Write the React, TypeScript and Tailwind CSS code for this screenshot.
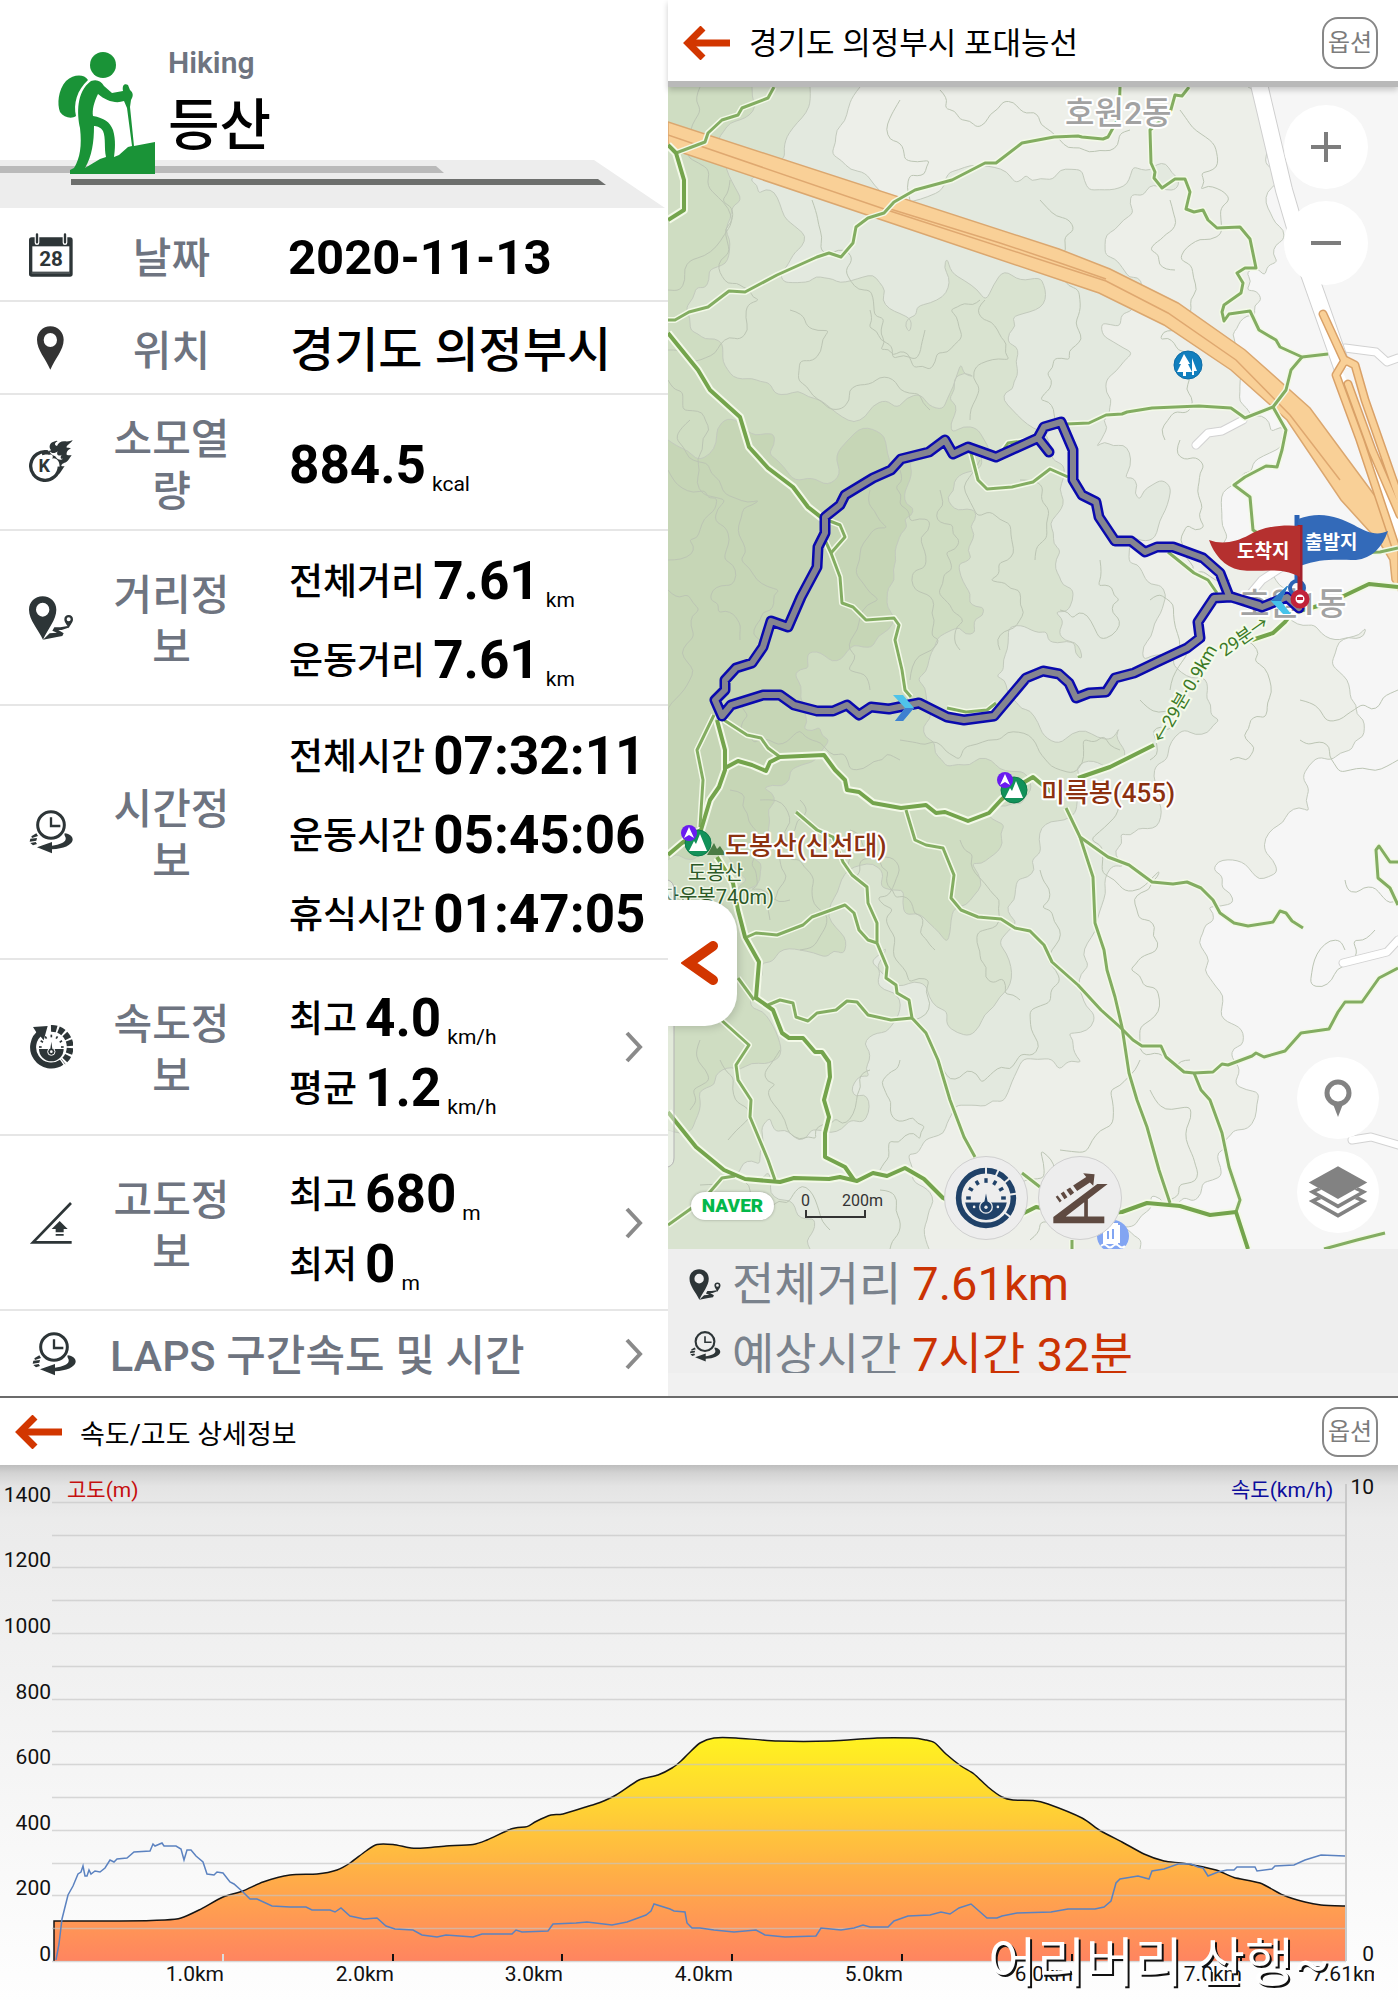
import React from "react";

type Pt = [number, number];

const FONT = "font-[Roboto,'Noto_Sans_CJK_KR',sans-serif]";

/* ---------- geometry helpers ---------- */

const pts = (s: string): Pt[] =>
  s.trim().split(/\s+/).map((p) => p.split(",").map(Number) as unknown as Pt);

const line = (s: string) => "M" + s.trim().split(/\s+/).join("L");

function smooth(p: Pt[]): string {
  let d = `M${p[0][0]},${p[0][1]}`;
  for (let i = 0; i < p.length - 1; i++) {
    const a = p[Math.max(0, i - 1)];
    const b = p[i];
    const c = p[i + 1];
    const e = p[Math.min(p.length - 1, i + 2)];
    d += `C${(b[0] + (c[0] - a[0]) / 8).toFixed(1)},${(b[1] + (c[1] - a[1]) / 8).toFixed(1)} ${(c[0] - (e[0] - b[0]) / 8).toFixed(1)},${(c[1] - (e[1] - b[1]) / 8).toFixed(1)} ${c[0]},${c[1]}`;
  }
  return d;
}

/* Breaks a coarse outline into an irregular contour line. */
function contour(s: string, seed: number): string {
  let state = seed * 7919 + 13;
  const rnd = () => {
    state = (state * 16807) % 2147483647;
    return state / 2147483647 - 0.5;
  };
  let p = pts(s);
  for (let k = 0; k < 3; k++) {
    const out: Pt[] = [p[0]];
    for (let i = 0; i < p.length - 1; i++) {
      const [ax, ay] = p[i];
      const [bx, by] = p[i + 1];
      const len = Math.hypot(bx - ax, by - ay);
      if (len > 14) {
        const r = rnd() * 0.75;
        out.push([(ax + bx) / 2 - (by - ay) * r, (ay + by) / 2 + (bx - ax) * r]);
      }
      out.push([bx, by]);
    }
    p = out;
  }
  let d = `M${p[0][0]},${p[0][1]}`;
  for (let i = 1; i < p.length - 1; i++) {
    const mx = (p[i][0] + p[i + 1][0]) / 2;
    const my = (p[i][1] + p[i + 1][1]) / 2;
    d += `Q${p[i][0].toFixed(1)},${p[i][1].toFixed(1)} ${mx.toFixed(1)},${my.toFixed(1)}`;
  }
  const e = p[p.length - 1];
  return d + `L${e[0]},${e[1]}`;
}

/* ---------- small icons ---------- */

const INK = "#2d3537";

function CalendarIcon() {
  return (
    <svg viewBox="0 0 132 132" className="size-11" aria-hidden="true">
      <rect x="0" y="13" width="131" height="118" rx="8" fill={INK} />
      <rect x="10" y="40" width="111" height="76" fill="#fff" />
      <rect x="8" y="119" width="115" height="2" fill="#8b9092" />
      <g stroke="#fff" strokeWidth="14" strokeLinecap="round"><path d="M24,6V29M108,6V29" /></g>
      <g stroke={INK} strokeWidth="7" strokeLinecap="round"><path d="M24,4V28M108,4V28" /></g>
      <text x="66" y="99" textAnchor="middle" fontSize="62" fontWeight="700" fill={INK} className={FONT}>28</text>
    </svg>
  );
}

function PinIcon() {
  return (
    <svg viewBox="0 0 132 132" className="size-11" aria-hidden="true">
      <path fillRule="evenodd" fill="#333" d="M64,1C41,1 24,19 24,41C24,72 50,97 64,131C78,97 104,72 104,41C104,19 87,1 64,1ZM64,21A20,21 0 1 1 64,63A20,21 0 1 1 64,21Z" />
    </svg>
  );
}

function CalorieIcon() {
  return (
    <svg viewBox="0 0 132 132" className="size-11" aria-hidden="true">
      <path d="M57,36A43,43 0 1 0 91,80" fill="none" stroke={INK} strokeWidth="10" />
      <path fill={INK} d="M38,38L54,30C50,33 62,36 66,30C58,22 62,8 74,5C88,0 80,3 86,3C78,8 74,14 84,18C88,8 96,3 108,4C118,5 126,3 131,0C126,10 114,14 112,22C116,24 122,24 126,24C118,30 112,34 113,44C118,46 124,46 128,46C122,52 120,62 112,66C104,70 98,70 97,78C102,80 106,78 107,78C102,84 96,98 88,104C92,92 94,74 88,64C84,56 74,52 70,56C74,48 70,42 62,44C52,44 50,42 40,46Z" />
      <path fill="#fff" d="M62,34C68,42 80,40 86,34C80,46 92,50 98,44C92,54 96,58 102,56C96,62 84,58 80,50C74,46 64,44 62,34Z" />
      <text x="46" y="97" textAnchor="middle" fontSize="54" fontWeight="700" fill={INK} className={FONT}>K</text>
    </svg>
  );
}

function DistanceIcon({ className = "size-11" }: { className?: string }) {
  return (
    <svg viewBox="0 0 132 132" className={className} aria-hidden="true">
      <path fillRule="evenodd" fill={INK} d="M41,1C18,1 0,18 0,41C0,72 27,98 42,131C56,98 82,72 82,41C82,18 64,1 41,1ZM41,20A20,21 0 1 1 41,62A20,21 0 1 1 41,20Z" />
      <path fill={INK} d="M42,131L62,112L84,110L70,104L76,94L94,94L116,90L118,95L98,102L88,102L104,112L100,120L80,124Z" />
      <path fillRule="evenodd" fill={INK} d="M119,57C111,57 106,62 106,70C106,80 114,86 119,97C124,86 132,80 132,70C132,62 127,57 119,57ZM119,64A6,6 0 1 1 119,76A6,6 0 1 1 119,64Z" />
    </svg>
  );
}

function TimeIcon({ className = "size-11" }: { className?: string }) {
  return (
    <svg viewBox="0 0 132 132" className={className} aria-hidden="true">
      <circle cx="66" cy="45" r="40" fill="none" stroke={INK} strokeWidth="9" />
      <path d="M66,22V48H94" fill="none" stroke={INK} strokeWidth="7" />
      <path fill={INK} d="M107,70C122,72 132,80 131,90C128,106 104,116 69,118V130L24,112L69,96V107C92,104 108,98 110,88C112,80 104,78 107,70Z" />
      <path fill={INK} d="M22,70L27,78L9,84L7,79ZM4,86L24,84L22,92L2,95ZM4,99L20,96L24,102L12,106Z" />
    </svg>
  );
}

function SpeedIcon() {
  const ticks = [0, 30, 60, 90, 120, 150, 180];
  return (
    <svg viewBox="0 0 132 132" className="size-11" aria-hidden="true">
      <path d="M36,22A54,54 0 1 0 98,112" fill="none" stroke={INK} strokeWidth="18" />
      <path fill={INK} d="M12,6L56,3L44,46L34,34L24,42L22,22Z" />
      <path d="M66,10A56,56 0 0 1 102,110" fill="none" stroke={INK} strokeWidth="20" strokeDasharray="17 6" />
      <path fill={INK} d="M30,72H104A37,37 0 0 1 30,72Z" />
      {ticks.map((a) => (
        <path key={a} d="M30,66H38" stroke={INK} strokeWidth="5" transform={`rotate(${a} 67 66)`} />
      ))}
      <circle cx="67" cy="80" r="11" fill={INK} stroke="#fff" strokeWidth="3" />
      <path d="M67,50L71,78H63Z" fill={INK} />
      <circle cx="67" cy="80" r="4" fill="#fff" />
    </svg>
  );
}

function ElevationIcon() {
  return (
    <svg viewBox="0 0 132 132" className="size-11" aria-hidden="true">
      <path d="M126,6L12,124H128" fill="none" stroke={INK} strokeWidth="8" />
      <path fill={INK} d="M92,60L116,84H104V94H80V84H68ZM80,99H104V104H80Z" />
    </svg>
  );
}

function BackArrow() {
  return (
    <svg viewBox="0 0 48 34" className="h-[34px] w-12" aria-hidden="true">
      <path d="M47,17H6" stroke="#d23600" strokeWidth="7" />
      <path d="M20,2L5,17L20,32" fill="none" stroke="#d23600" strokeWidth="7" />
    </svg>
  );
}

function Chevron() {
  return (
    <svg viewBox="0 0 20 32" className="h-8 w-5" aria-hidden="true">
      <path d="M3,2L16,16L3,30" fill="none" stroke="#8a8a8a" strokeWidth="4" />
    </svg>
  );
}

/* ---------- summary panel ---------- */

function SummaryHeader() {
  return (
    <header className="relative h-[209px]">
      <svg viewBox="0 0 668 209" preserveAspectRatio="xMinYMin meet" className="absolute inset-0 size-full" aria-hidden="true">
        <path fill="#ededed" d="M0,160H594L665,208H0Z" />
        <path fill="#bababa" d="M0,166H436L444,173H0Z" />
        <path fill="#6d6f6d" d="M71,179H598L606,185H71Z" />
        <g fill="#1a9337">
          <circle cx="103" cy="65" r="13" />
          <path d="M88,80C84,74 74,74 66,81C58,90 57,104 60,112C64,118 72,119 76,116C73,104 77,90 88,80Z" />
          <path d="M91,81C97,79 101,81 104,86L112,93L123,91C122,86 124,83 128,85L130,90C134,93 133,97 131,100L130,107L134,146L155,142V174H70V170L74,168C80,158 82,146 80,128C77,114 76,92 91,81ZM98,94C94,102 92,110 93,116C104,118 110,122 113,130C116,140 115,150 114,157L119,155L128,147L132,146L127,108L124,101C116,104 106,101 98,94ZM94,126C94,142 92,156 85,168L100,159L106,157C104,148 106,138 103,131C101,127 96,126 94,126Z" fillRule="evenodd" />
        </g>
      </svg>
      <div className="relative pt-[46px] pl-42">
        <p className="text-[30px]/[34px] font-semibold text-[#6e7480]">Hiking</p>
        <h1 className="pt-2.5 text-[56px]/[72px] font-medium text-black">등산</h1>
      </div>
    </header>
  );
}

type Item = { label?: string; value: string; unit?: string };

function Metric({ label, value, unit }: Item) {
  return (
    <p className="flex items-end whitespace-nowrap text-black">
      {label && <span className="mr-2 text-[37px]/[58px] font-medium">{label}</span>}
      <span className="text-[53px]/[62px] font-bold">{value}</span>
      {unit && <span className="ml-1.5 text-[21px]/[24px]">{unit}</span>}
    </p>
  );
}

function RowLabel({ icon, children }: { icon: React.ReactNode; children: React.ReactNode }) {
  return (
    <>
      <span className="w-[99px] shrink-0 pl-[29px]">{icon}</span>
      <span className="w-[145px] shrink-0 pt-2 text-center text-[42px]/[52px] font-medium text-[#6e7480]">{children}</span>
    </>
  );
}

function SummaryPanel() {
  return (
    <section className="min-w-0 bg-white">
      <SummaryHeader />
      <div className="flex min-h-[93px] items-center border-b-2 border-[#e6e6e6]">
        <RowLabel icon={<CalendarIcon />}>날짜</RowLabel>
        <p className="pt-1.5 pl-11 text-[49px]/[60px] font-bold text-black">2020-11-13</p>
      </div>
      <div className="flex min-h-[93px] items-center border-b-2 border-[#e6e6e6]">
        <RowLabel icon={<PinIcon />}>위치</RowLabel>
        <p className="pt-1.5 pl-[46px] text-[48px]/[60px] font-medium text-black">경기도 의정부시</p>
      </div>
      <div className="flex min-h-[136px] items-center border-b-2 border-[#e6e6e6]">
        <RowLabel icon={<CalorieIcon />}>소모열량</RowLabel>
        <div className="pt-1.5 pl-[45px]">
          <Metric value="884.5" unit="kcal" />
        </div>
      </div>
      <div className="flex min-h-[175px] items-center border-b-2 border-[#e6e6e6]">
        <RowLabel icon={<DistanceIcon />}>거리정보</RowLabel>
        <div className="flex flex-col gap-[17px] pt-1.5 pl-[45px]">
          <Metric label="전체거리" value="7.61" unit="km" />
          <Metric label="운동거리" value="7.61" unit="km" />
        </div>
      </div>
      <div className="flex min-h-[254px] items-center border-b-2 border-[#e6e6e6]">
        <RowLabel icon={<TimeIcon />}>시간정보</RowLabel>
        <div className="flex flex-col gap-[17px] pt-1.5 pl-[45px]">
          <Metric label="전체시간" value="07:32:11" />
          <Metric label="운동시간" value="05:45:06" />
          <Metric label="휴식시간" value="01:47:05" />
        </div>
      </div>
      <button className="flex min-h-[176px] w-full items-center border-b-2 border-[#e6e6e6] text-left">
        <RowLabel icon={<SpeedIcon />}>속도정보</RowLabel>
        <span className="flex grow flex-col gap-2 pt-3 pl-[45px]">
          <Metric label="최고" value="4.0" unit="km/h" />
          <Metric label="평균" value="1.2" unit="km/h" />
        </span>
        <span className="pr-6"><Chevron /></span>
      </button>
      <button className="flex min-h-[175px] w-full items-center border-b-2 border-[#e6e6e6] text-left">
        <RowLabel icon={<ElevationIcon />}>고도정보</RowLabel>
        <span className="flex grow flex-col gap-2 pt-3 pl-[45px]">
          <Metric label="최고" value="680" unit="m" />
          <Metric label="최저" value="0" unit="m" />
        </span>
        <span className="pr-6"><Chevron /></span>
      </button>
      <button className="flex min-h-[85px] w-full items-center text-left">
        <span className="w-[110px] shrink-0 pl-8"><TimeIcon /></span>
        <span className="grow pt-1 text-[43px]/[52px] font-medium text-[#6e7480]">LAPS 구간속도 및 시간</span>
        <span className="pr-6"><Chevron /></span>
      </button>
    </section>
  );
}

/* ---------- map ---------- */

const LAYERS: { fill: string; edge: string; close: string; seed: number }[] = [
  {
    fill: "#edefe9",
    edge: "1248,87 1268,150 1284,230 1278,262 1246,272 1262,300 1230,350 1240,392 1290,430 1282,447 1240,480 1222,513 1236,560 1287,590 1340,640 1366,627 1350,690 1352,750 1310,812 1273,828 1278,872 1213,870 1234,903 1203,933 1204,970 1222,1007 1231,1057 1234,1130 1213,1180 1150,1195 1122,1227 1140,1249",
    close: "668,1249 668,87",
    seed: 3,
  },
  {
    fill: "#e3e9df",
    edge: "860,87 836,130 850,170 947,173 994,167 1040,178 1082,170 1110,190 1166,163 1180,180 1134,213 1115,230 1138,277 1101,323 1133,353 1106,393 1096,447 1130,452 1140,500 1171,487 1157,533 1129,563 1161,613 1143,660 1203,677 1208,733 1157,787 1157,827 1120,833 1124,867 1106,893 1087,943 1092,1027 1068,1033 1082,1063 1008,1093 947,1123 933,1137 915,1183 929,1210 929,1249",
    close: "668,1249 668,87",
    seed: 8,
  },
  {
    fill: "#d9e3d0",
    edge: "810,87 789,133 750,180 784,217 780,273 840,283 863,277 882,300 910,333 943,297 947,257 1040,277 1036,310 1012,317 1017,347 1003,400 1022,420 1052,460 1064,500 1054,533 1073,600 1082,660 1031,630 1003,660 1030,710 1120,727 1124,760 1078,787 1031,860 1017,923 994,1007 957,1033 929,997 887,947 877,983 900,1010 877,1033 854,1083 863,1123 820,1130 770,1117 760,1165 733,1177 790,1200 810,1249",
    close: "668,1249 668,87",
    seed: 21,
  },
  {
    fill: "#cfddc2",
    edge: "752,87 740,120 718,150 742,200 730,240 696,287 690,330 733,377 770,383 808,397 854,423 943,410 961,363 975,377 952,433 990,450 947,497 971,543 966,587 975,633 929,660 926,700 947,767 1031,783 989,817 1003,843 971,863 947,943 929,923 873,863 845,937 800,950 761,963 780,1043 740,1070 700,1110 668,1130",
    close: "668,1130 668,87",
    seed: 34,
  },
  {
    fill: "#c6d6b6",
    edge: "668,440 742,423 784,467 882,433 882,473 925,455 910,480 901,533 887,607 873,647 808,653 800,700 830,740 790,770 770,820 760,880 740,900 700,850 668,860",
    close: "668,860 668,440",
    seed: 47,
  },
];

const CONTOURS = [
  "700,87 690,130 710,170 690,260 668,290",
  "730,180 720,260 760,300 740,340 668,350",
  "812,200 820,250 870,290 880,350 930,370 950,310 980,300",
  "985,300 1010,360 970,420",
  "1040,200 1075,230 1060,270 1080,300 1070,360 1040,400 1060,425",
  "1180,110 1210,140 1200,190 1230,200 1210,240 1180,260 1190,300 1160,340 1190,380 1165,440",
  "900,100 890,140 930,160 910,200",
  "940,90 960,120 1020,110 1060,140 1100,150 1130,130",
  "668,470 705,490 700,530 668,560",
  "690,420 720,480 760,500 740,560 780,590 760,640",
  "900,470 930,520 915,590 940,640 910,680",
  "980,460 1000,520 990,580 1020,620 1000,650",
  "870,490 860,560 880,600 850,640 870,690",
  "1020,480 1050,510 1035,560",
  "1180,440 1200,500 1180,540 1230,580",
  "668,590 700,610 690,680 668,720",
  "900,740 960,760 1000,740 1060,770 1120,750",
  "1120,800 1090,840 1160,870 1150,920 1130,970 1160,1000 1140,1040 1190,1060",
  "730,790 760,840 750,890 790,900",
  "800,800 790,860 820,910 800,950",
  "850,830 900,870 890,930 930,980 915,1020",
  "960,840 1000,900 980,960 1020,1000",
  "1040,870 1060,940 1030,1010 1010,1070 950,1080 930,1040",
  "700,1040 710,1080 690,1110",
  "780,1050 770,1100 800,1140 850,1120 870,1070",
  "900,1060 890,1110 920,1140 880,1170",
  "1060,1150 1100,1130 1110,1090 1140,1060",
  "1020,1190 1040,1150 1065,1180",
  "1150,1090 1190,1150 1170,1200",
  "700,1185 760,1200 810,1190 830,1230",
  "880,1190 900,1220 890,1249",
  "1030,1240 1060,1215 1090,1230",
  "1300,740 1350,770 1398,760",
  "1375,930 1310,985 1330,940 1345,950",
  "1345,880 1398,900",
  "1300,700 1340,720 1398,690",
  "1240,640 1270,680 1250,720 1230,760",
  "1140,700 1180,720 1150,760",
  "668,380 710,430 700,470 730,540 710,600 740,640",
  "790,310 830,330 800,360 850,400 900,390 930,410",
  "870,310 880,340 915,360 925,330",
  "940,490 960,540 945,600 960,650",
  "1100,560 1120,600 1100,640 1060,610",
  "740,700 770,740 800,730 850,770 900,760",
  "760,800 780,860 770,920",
  "830,840 850,880 880,860 910,900 935,950",
  "1170,200 1150,250 1175,270",
  "1150,600 1180,640 1170,690",
  "720,1060 735,1100 728,1140",
];

const MAIN_TRAILS = [
  "668,145 676,153 684,180 684,210 668,220",
  "668,333 698,370 710,390 740,417 749,447 768,468 793,487 808,507 822,518",
  "717,720 725,750 725,770 719,787 710,800 701,830 682,843 668,855",
  "725,768 738,761 752,765 766,771 770,762 780,757 824,755 835,770 845,780 847,790 859,792 873,803 901,808 926,805 936,813 945,812 968,821 989,813 1001,800 1013,789 1033,777 1040,783 1055,795",
  "1078,778 1110,767 1154,745",
  "1252,640 1273,633 1285,622 1292,613 1329,603 1369,584 1398,587",
  "717,857 733,883 738,910 745,937 759,962 756,998 773,1010 782,1033 789,1038 803,1038 815,1052 822,1052 829,1062 830,1077 824,1100 829,1117 825,1133 825,1157 845,1167 854,1180",
  "668,1112 696,1147 724,1170 745,1179 780,1182 794,1178 829,1179 840,1177 857,1181 873,1173 887,1176 905,1168 924,1179 943,1198 1000,1225 1026,1212 1036,1207 1080,1215 1122,1212 1147,1203 1180,1206 1210,1215 1236,1212 1248,1249",
];

const SIDE_TRAILS = [
  "774,87 768,98 742,108 738,115 722,120 708,133 705,142 676,153",
  "1120,87 1119,117 1108,137 1103,139 1082,137 1078,136 1054,137 1022,143 996,163 985,163 952,180 915,190 894,202 884,213 868,218 856,227 853,243 841,257 829,253 817,257 777,275 745,292 729,291 708,307 689,312 675,320 668,320",
  "1189,87 1182,96 1175,95 1170,113 1150,130 1151,163 1155,172 1154,178 1162,188 1175,179 1185,179 1190,192 1186,209 1194,212 1203,210 1208,220 1217,228 1240,227 1250,239 1256,268 1245,268 1237,273 1243,283 1241,293 1224,305 1222,312 1224,321 1229,314 1250,311 1259,330 1276,340 1280,347 1302,357 1328,354",
  "1302,357 1291,370 1286,390 1273,407 1245,418 1231,408 1199,406 1152,408 1127,412 1122,414 1106,415 1089,423 1066,424",
  "1273,407 1286,430 1282,450 1277,467 1266,466 1245,477 1234,485 1250,497 1253,530 1273,543 1301,555 1380,552 1398,548",
  "822,518 840,525 845,537 831,553",
  "825,540 831,553 840,577 842,603 853,607 866,620 894,618 899,625 895,640 902,670 905,690 911,697",
  "971,453 978,480 987,489 1012,487 1033,482 1050,469 1068,477",
  "1003,450 1008,443 1030,440",
  "1168,552 1194,573 1208,580 1217,593",
  "947,708 966,712 987,710 996,703",
  "714,715 697,750 703,780 700,827",
  "724,720 747,735 761,738 768,748 780,757",
  "1066,808 1080,837 1108,857 1129,865 1152,882 1173,884 1187,882 1201,888 1213,900 1220,913 1234,923 1248,926 1273,922 1280,911 1286,913 1292,921 1303,928",
  "1080,837 1093,877 1095,923 1104,950 1107,970 1115,997 1122,1027 1129,1073 1137,1100 1147,1127 1159,1170 1170,1203",
  "906,810 915,840 926,845 943,848 954,875 951,898 961,910 978,917 1001,919 1015,928 1030,931 1044,945 1052,962 1078,985 1101,1010 1120,1027 1133,1040 1142,1046 1161,1046 1166,1057 1184,1072 1194,1073 1213,1072 1222,1064 1228,1065 1252,1056 1256,1053 1264,1057 1285,1051 1301,1033 1329,1029 1338,1012 1345,1002 1362,1002 1379,978 1398,968",
  "1194,1073 1201,1090 1210,1100 1222,1133 1229,1167 1240,1200 1236,1212",
  "796,812 817,830 833,837 843,862 852,875 867,887 868,903 877,923 877,943 887,967 886,978 896,985 897,993 909,1000 912,1018 926,1033 938,1060 950,1100 964,1137 975,1157",
  "1022,1173 1040,1187",
  "747,937 756,933 777,935 803,925 812,917 845,905 854,913 859,930 868,940 877,943",
  "768,1005 780,1000 793,1003 796,1017 808,1021 817,1013 836,1010 847,1001 857,1002 868,1015 891,1020 912,1018",
  "719,1018 749,1045 736,1065 738,1080 751,1100 750,1117 768,1160 775,1180",
  "738,978 754,1000",
  "735,1176 722,1178 703,1200 668,1225",
  "1398,862 1390,862 1379,846 1376,850 1378,878 1390,888 1398,905",
  "1324,1249 1357,1240 1385,1233",
  "1072,1240 1072,1249",
];

const ROUTE =
  "1299,608 1287,597 1262,607 1229,596 1220,573 1203,558 1173,547 1157,547 1145,552 1131,541 1115,541 1099,517 1096,502 1082,495 1073,480 1073,450 1061,422 1044,427 1038,438 996,457 968,447 953,454 945,440 929,452 901,459 891,470 873,478 845,495 840,505 825,517 825,533 818,547 817,567 801,597 788,627 771,621 763,647 752,663 736,668 725,680 725,690 715,700 722,716 731,705 763,695 780,695 794,705 817,711 833,711 847,705 859,715 871,707 889,709 919,703 947,717 964,720 994,716 1026,678 1043,671 1059,674 1069,683 1076,698 1089,693 1106,692 1115,678 1134,673 1157,662 1187,648 1200,638 1198,622 1214,598 1231,597 1259,605";
const ROUTE_SPUR = "1038,438 1049,452";

const WHITE_ROADS = [
  "1345,348 1376,352 1387,362 1398,358",
  "1196,445 1208,433 1222,431 1243,420",
  "1343,963 1387,952 1398,940",
  "1352,1140 1371,1137 1398,1145",
  "1252,592 1262,580 1285,565",
];

function PeakMarker({ x, y }: { x: number; y: number }) {
  return (
    <g transform={`translate(${x} ${y})`}>
      <circle r="13" fill="#12925a" stroke="#0b7a49" />
      <path d="M-9,8L-4,-2L-2,1L2,-9L9,8Z" fill="#fff" />
      <circle cx="-9" cy="-10" r="8" fill="#6a1bf0" />
      <path d="M-9,-16L-4,-5L-9,-8L-14,-5Z" fill="#fff" />
    </g>
  );
}

function MapCanvas() {
  return (
    <svg viewBox="668 87 730 1162" preserveAspectRatio="xMidYMid slice" className={`absolute inset-0 size-full ${FONT}`} role="img" aria-label="등산 경로 지도">
      <rect x="668" y="87" width="730" height="1162" fill="#f6f6f6" />
      {LAYERS.map((l) => {
        const d = contour(l.edge, l.seed);
        return (
          <g key={l.fill}>
            <path d={d + "L" + l.close.split(" ").join("L") + "Z"} fill={l.fill} />
            <path d={d} fill="none" stroke="#c3cabd" strokeWidth="1" />
          </g>
        );
      })}
      <g fill="none" stroke="#bcc5b4" strokeWidth="1">
        {CONTOURS.map((c, i) => <path key={c} d={contour(c, i + 5)} />)}
      </g>

      <g fill="none" strokeLinejoin="round">
        {WHITE_ROADS.map((r) => <path key={r} d={line(r)} stroke="#d2d2d2" strokeWidth="9" strokeLinecap="round" />)}
        {WHITE_ROADS.map((r) => <path key={r} d={line(r)} stroke="#fff" strokeWidth="7" strokeLinecap="round" />)}
        <path d="M1258,80L1284,190L1307,268L1343,370" stroke="#cfcfcf" strokeWidth="18" />
        <path d="M1258,80L1284,190L1307,268L1343,370" stroke="#fff" strokeWidth="16" />
      </g>

      <path d="M668,122L1059,249L1110,269L1178,303L1245,350L1310,408L1378,500L1398,530V590L1392,580L1390,560L1380,543L1341,500L1287,420L1231,370L1164,325L1099,293L668,148Z" fill="#f9d097" stroke="#dba76f" strokeWidth="1.500" />
      <path d="M668,135L887,210L1106,281L1168,313L1236,360L1290,415L1340,480M887,208L1000,243L1060,263L1106,279" fill="none" stroke="#dfa870" strokeWidth="1.500" />
      <path d="M1398,540L1378,475L1352,405L1336,372" fill="none" stroke="#fff" strokeWidth="12" />
      <g fill="none" strokeLinecap="round" strokeLinejoin="round">
        <path d="M1323,314L1345,362M1345,360L1336,375L1360,440L1395,545M1348,384L1372,450L1400,515M1345,360L1355,365L1365,400L1400,500" stroke="#d9a168" strokeWidth="9" />
        <path d="M1323,314L1345,362M1345,360L1336,375L1360,440L1395,545M1348,384L1372,450L1400,515M1345,360L1355,365L1365,400L1400,500" stroke="#f9d097" strokeWidth="6" />
      </g>

      <g fill="none" strokeLinejoin="round">
        {SIDE_TRAILS.map((t) => <path key={t} d={line(t)} stroke="#f3f9e8" strokeWidth="6" />)}
        {MAIN_TRAILS.map((t) => <path key={t} d={line(t)} stroke="#f3f9e8" strokeWidth="8" />)}
        {SIDE_TRAILS.map((t) => <path key={t} d={line(t)} stroke="#83ad61" strokeWidth="3" />)}
        {MAIN_TRAILS.map((t) => <path key={t} d={line(t)} stroke="#74a44c" strokeWidth="4" />)}
      </g>

      <g fontSize="32" fontWeight="500" fill="#a2a2a2" stroke="#fff" strokeWidth="4" paintOrder="stroke" strokeLinejoin="round">
        <text x="1065" y="124">호원2동</text>
        <text x="1240" y="615">호원1동</text>
      </g>

      <g fontSize="18" fill="#3c7a26" stroke="#f4faea" strokeWidth="4" paintOrder="stroke">
        <text transform="translate(1163 744) rotate(-60)">←29분·0.9km</text>
        <text transform="translate(1225 657) rotate(-35)">29분→</text>
      </g>

      <g fill="none" strokeLinejoin="round" strokeLinecap="round">
        <path d={line(ROUTE) + line(ROUTE_SPUR)} stroke="#0a0aae" strokeWidth="11" />
        <path d={line(ROUTE) + line(ROUTE_SPUR)} stroke="#85858f" strokeWidth="6" />
      </g>

      <path d="M893,695H903L914,708L903,721H895L905,708Z" fill="#4fc4ea" />
      <path d="M903,721L914,708H905L895,721Z" fill="#3f80d0" />
      <path d="M1287,586L1271,601L1283,614H1291L1281,601L1288,586Z" fill="#45c3ea" />
      <path d="M1287,586L1271,601H1281L1288,586Z" fill="#2f7bc4" />

      <circle cx="1297" cy="588" r="7" fill="none" stroke="#2a62b4" strokeWidth="4" />
      <path d="M1297,515V580" stroke="#2a62b4" strokeWidth="5" />
      <path d="M1298,519C1322,510 1340,518 1354,525C1368,533 1377,536 1388,531C1382,548 1372,558 1356,560C1336,560 1322,558 1300,566Z" fill="#336ab9" />
      <path d="M1300,525V594" stroke="#a3202b" strokeWidth="5" />
      <path d="M1300,526C1282,524 1262,527 1249,535C1236,542 1222,545 1209,540C1214,554 1224,567 1240,570C1262,573 1280,566 1300,577Z" fill="#b5302f" />
      <circle cx="1300" cy="599" r="7" fill="#fff" stroke="#c1233a" strokeWidth="5" />
      <path d="M1297,597H1303V600H1297Z" fill="#c1233a" />
      <g fontSize="19" fontWeight="700" fill="#fff">
        <text x="1305" y="549">출발지</text>
        <text x="1237" y="558">도착지</text>
      </g>

      <circle cx="1188" cy="365" r="14" fill="#117fbe" stroke="#0b6ba6" />
      <path d="M1184,354L1190,364H1188L1192,372H1186V376H1183V372H1177L1181,364H1179ZM1192,358L1197,371H1194V375H1192Z" fill="#fff" />

      <path d="M707,855L714,843L717,849L720,846L726,855Z" fill="#4b7c45" />
      <PeakMarker x={1014} y={790} />
      <PeakMarker x={698} y={843} />
      <g fontSize="26" fontWeight="500" fill="#8c3110" stroke="#fff" strokeWidth="4" paintOrder="stroke" strokeLinejoin="round">
        <text x="1041" y="802">미륵봉(455)</text>
        <text x="725" y="855">도봉산(신선대)</text>
      </g>
      <g fontSize="20" fill="#2c5927" stroke="#f1f7e8" strokeWidth="3" paintOrder="stroke" strokeLinejoin="round">
        <text x="688" y="880">도봉산</text>
        <text x="774" y="904" textAnchor="end">자운봉740m)</text>
      </g>

      <circle cx="1113" cy="1236" r="16" fill="#82a5f2" />
      <path d="M1104,1228H1108V1225H1110V1228H1112V1224H1117V1243H1104ZM1119,1225V1243" fill="#fff" stroke="#fff" strokeWidth="2" />
      <path d="M1108,1231V1239M1113,1229V1239" stroke="#82a5f2" strokeWidth="2" />
      <path d="M1101,1246Q1104,1243 1107,1246T1113,1246T1119,1246T1125,1246" stroke="#fff" strokeWidth="2" fill="none" />
      <path d="M660,880H668Q674,882 674,890V1158Q674,1165 668,1167H660Z" fill="#fff" fillOpacity=".4" stroke="#b3b3b3" />
    </svg>
  );
}

function GaugeGlyph() {
  return (
    <svg viewBox="-100 -100 200 200" className="size-[66px]" aria-hidden="true">
      <circle r="83" fill="none" stroke="#1f4168" strokeWidth="17" />
      <g stroke="#ededed" strokeWidth="6">
        <path d="M0,-70V-96" />
        <path d="M0,-70V-96" transform="rotate(24)" />
        <path d="M0,-70V-96" transform="rotate(50)" />
        <path d="M0,-70V-96" transform="rotate(82)" />
        <path d="M0,-70V-96" transform="rotate(128)" />
      </g>
      {[-90, -60, -30, 0, 30, 60, 90].map((a) => (
        <path key={a} d="M0,-60V-46" stroke="#1f4168" strokeWidth="10" transform={`rotate(${a})`} />
      ))}
      <path d="M-63,14H63A64,64 0 0 1 -63,14Z" fill="#1f4168" />
      <circle cy="27" r="19" fill="#1f4168" stroke="#ededed" strokeWidth="4" />
      <path d="M0,-14L7,22A8,8 0 1 1 -7,22Z" fill="#1f4168" />
      <circle cy="28" r="5" fill="#ededed" />
      <circle cx="-36" cy="27" r="4" fill="#ededed" />
      <circle cx="36" cy="27" r="4" fill="#ededed" />
    </svg>
  );
}

function SlopeGlyph() {
  return (
    <svg viewBox="0 0 164 152" className="h-[51px] w-[55px]" aria-hidden="true">
      <g fill="#5f4a41">
        <path fillRule="evenodd" d="M132,33H163L104,78V130H153V150H1V131ZM93,87L38,130H93Z" />
        <path d="M90,1L124,4L120,38L110,28L72,54L60,37L99,12Z" />
        <path d="M40,50L51,43L63,59L52,67ZM23,61L32,55L43,72L34,78ZM8,71L14,67L26,83L20,88Z" />
      </g>
    </svg>
  );
}

function MapPanel() {
  const round = "grid place-items-center rounded-full";
  return (
    <section className="flex min-w-0 flex-col bg-[#ededed]">
      <header className="z-10 flex h-[87px] items-center border-b-[6px] border-[#b9b9b9] bg-white pr-3.5 pl-[15px] shadow-[0_3px_6px_rgba(0,0,0,0.2)]">
        <button aria-label="뒤로" className="pt-1"><BackArrow /></button>
        <h2 className="grow pt-1.5 pl-[18px] text-[31px]/[40px] text-black">경기도 의정부시 포대능선</h2>
        <button className="mt-1 mr-1.5 h-[52px] w-14 rounded-2xl border-2 border-[#878787] bg-white text-[24px]/[48px] whitespace-nowrap text-[#7c7c7c]">
          <span className="-mx-1">옵션</span>
        </button>
      </header>
      <div className="relative grow overflow-hidden">
        <MapCanvas />
        <div className="absolute top-[18px] right-[30px] flex flex-col gap-3">
          <button aria-label="확대" className={`${round} size-[84px] bg-white`}>
            <svg viewBox="0 0 30 30" className="size-[30px]" aria-hidden="true"><path d="M15,0V30M0,15H30" stroke="#7d7d7d" strokeWidth="4" /></svg>
          </button>
          <button aria-label="축소" className={`${round} size-[84px] bg-white`}>
            <svg viewBox="0 0 30 30" className="size-[30px]" aria-hidden="true"><path d="M0,15H30" stroke="#7d7d7d" strokeWidth="4" /></svg>
          </button>
        </div>
        <button aria-label="패널 열기" className="absolute top-[813px] left-0 grid h-[126px] w-[69px] place-items-center rounded-r-[32px] bg-white pr-1.5 shadow-[2px_2px_8px_rgba(0,0,0,0.15)]">
          <svg viewBox="0 0 38 46" className="h-[46px] w-[38px]" aria-hidden="true"><path d="M32,6L8,23L32,40" fill="none" stroke="#d23600" strokeWidth="10" strokeLinecap="round" /></svg>
        </button>
        <div className="absolute right-[19px] bottom-4 flex flex-col gap-3">
          <button aria-label="내 위치" className={`${round} size-[82px] bg-white`}>
            <svg viewBox="0 0 28 38" className="h-[38px] w-7" aria-hidden="true">
              <circle cx="14" cy="14" r="11" fill="none" stroke="#828282" strokeWidth="5" />
              <path d="M9,25H19L14,38Z" fill="#828282" />
            </svg>
          </button>
          <button aria-label="지도 종류" className={`${round} size-[82px] bg-white`}>
            <svg viewBox="0 0 180 158" className="h-[52px] w-[60px]" aria-hidden="true">
              <g fill="#828282">
                <path fillRule="evenodd" d="M28,93L1,106L90,157L179,106L152,93L140,100L156,107L90,144L24,107L40,100Z" />
                <path d="M28,65L1,78L90,129L179,78L152,65L140,72L156,79L90,116L24,79L40,72Z" />
                <path d="M90,1L179,50L90,100L1,50Z" />
              </g>
            </svg>
          </button>
        </div>
        <div className="absolute bottom-[29px] left-[23px] grid h-7 w-[83px] place-items-center rounded-full bg-white shadow-[0_0_3px_rgba(0,0,0,0.3)]">
          <span className="text-[19px]/[26px] font-black text-[#03b84a]">NAVER</span>
        </div>
        <div className="absolute bottom-[31px] left-[133px] w-[82px] text-[16px]/[18px] text-[#333]">
          <p className="flex justify-between"><span>0</span><span>200m</span></p>
          <div className="ml-1 h-2 w-[61px] border-2 border-t-0 border-[#333]" />
        </div>
        <div className="absolute bottom-[9px] left-[276px] flex gap-2.5">
          <button aria-label="속도" className={`${round} size-[84px] border border-[#cfcfcf] bg-[#ededed]`}><GaugeGlyph /></button>
          <button aria-label="고도" className={`${round} size-[84px] border border-[#cfcfcf] bg-[#ededed]`}><SlopeGlyph /></button>
        </div>
      </div>
      <div className="bg-[#eeeeee] pl-[21px] whitespace-nowrap">
        <p className="flex h-[70px] items-center text-[46px]/[68px] text-[#7a828c]">
          <DistanceIcon className="h-[31px] w-8" />
          <span className="pl-[11px]">전체거리</span>
          <span className="pl-[11px] text-[47px] text-[#cb3303]">7.61km</span>
        </p>
        <p className="flex h-[54px] overflow-hidden text-[46px]/[72px] text-[#7a828c]">
          <span className="pt-3"><TimeIcon className="h-[31px] w-8" /></span>
          <span className="pl-[11px]">예상시간</span>
          <span className="pl-[11px] text-[47px] text-[#cb3303]">7시간 32분</span>
        </p>
      </div>
      <div className="h-[23px] bg-[#f1f1f1]" />
    </section>
  );
}

/* ---------- chart ---------- */

const ELEVATION =
  "54,1921 120,1921 165,1920 181,1918 199,1910 223,1897 243,1891 263,1882 290,1875 317,1874 337,1870 350,1863 366,1851 377,1844.5 393,1844.5 411,1848 424,1848 446,1846 473,1844.5 487,1840 511,1829 527,1826.6 536,1821.5 551,1815 563,1814 589,1806 600,1802.5 616,1795 639,1780 658,1775 672,1768 681,1761 688,1754 700,1743 714,1738 736,1738 778,1741 830,1741 877,1738 912,1738 926,1740 935,1743 946,1754 961,1766 974,1774 988,1787 1002,1797 1013,1800 1033,1800.5 1048,1804 1082,1818 1100,1830.5 1122,1842 1144,1854 1164,1861 1185,1863.5 1216,1870 1234,1877.5 1260,1883 1283,1895 1305,1902 1321,1905 1345,1906";

const SPEED =
  "56,1960 59,1944 62,1919 68,1895 73,1886 78,1874 81,1872 83,1866 85,1876 87,1876 89,1870 91,1874 95,1871 100,1872 105,1868 110,1860 114,1862 117,1859 127,1858 134,1852 150,1851 153,1844 155,1846 162,1843 164,1846 176,1846 181,1849 184,1860 187,1850 191,1850 196,1856 203,1862 207,1874 214,1875 217,1872 223,1873 230,1882 234,1884 243,1892 250,1899 257,1899 272,1906 290,1907 306,1907 312,1910 330,1910 335,1912 341,1908 350,1916 364,1919 377,1918 386,1926 395,1929 413,1930 422,1935 437,1937 446,1935 473,1937 482,1934 512,1934 516,1930 522,1932 548,1931 553,1924 576,1923 587,1922 612,1925 627,1922 638,1918 646,1915 651,1911 654,1904 670,1909 674,1911 685,1912 687,1923 692,1928 700,1928 714,1930 734,1932 756,1930 765,1935 785,1937 816,1936 821,1928 841,1930 854,1928 863,1925 870,1927 888,1927 894,1921 908,1916 930,1915 941,1912 950,1914 959,1908 971,1904 979,1911 987,1918 997,1918 1002,1916 1017,1913 1051,1912 1068,1909 1095,1909 1104,1907 1111,1901 1116,1883 1120,1879 1138,1876 1149,1879 1152,1871 1164,1869 1178,1864 1191,1864 1198,1867 1203,1868 1208,1876 1218,1872 1227,1870 1234,1870 1237,1867 1255,1867 1257,1871 1272,1869 1275,1866 1294,1865 1305,1860 1321,1855 1345,1856";

function ProfileChart() {
  const top = smooth(pts(ELEVATION));
  const steps = Array.from({ length: 15 }, (_, i) => i);
  const yOf = (i: number) => Math.round(1961 - i * 32.8);
  return (
    <svg viewBox="0 1465 1398 535" className={`block h-auto w-full ${FONT}`} role="img" aria-label="고도와 속도 그래프">
      <defs>
        <linearGradient id="backdrop" x1="0" y1="0" x2="0" y2="1">
          <stop offset="0" stopColor="#bdbdbd" />
          <stop offset=".015" stopColor="#d3d3d3" />
          <stop offset=".04" stopColor="#e4e4e4" />
          <stop offset=".1" stopColor="#ebebeb" />
          <stop offset="1" stopColor="#fefefe" />
        </linearGradient>
        <linearGradient id="terrain" gradientUnits="userSpaceOnUse" x1="0" y1="1738" x2="0" y2="1961">
          <stop offset="0" stopColor="#fff220" />
          <stop offset=".25" stopColor="#ffd930" />
          <stop offset=".6" stopColor="#ffb046" />
          <stop offset="1" stopColor="#ff8460" />
        </linearGradient>
      </defs>
      <rect y="1465" width="1398" height="535" fill="url(#backdrop)" />
      <path d={top + "V1961H54Z"} fill="url(#terrain)" />
      <path d={"M54,1961V1921" + top.replace("M", "L")} fill="none" stroke="#151515" strokeWidth="1.500" />
      {steps.map((i) => (
        <path key={i} d={`M52,${yOf(i) + 0.5}H1346`} stroke="#c4c4c4" strokeOpacity=".65" strokeWidth="1.500" />
      ))}
      <path d={line(SPEED)} fill="none" stroke="#5b82c0" strokeWidth="1.500" />
      <path d="M1346,1484V1961" stroke="#c9c9c9" strokeWidth="2" />
      <path d="M223,1954V1962" stroke="#ddd" strokeWidth="2" />
      {[1, 2, 3, 4, 5, 6].map((i) => (
        <path key={i} d={`M${223 + Math.round(i * 169.7)},1954V1961`} stroke="#111" strokeWidth="2" />
      ))}
      <g fontSize="21" fill="#111">
        {steps.filter((i) => i % 2 === 0).map((i) => (
          <text key={i} x="51" y={yOf(i)} textAnchor="end">{i * 100}</text>
        ))}
        {[1, 2, 3, 4, 5, 6, 7].map((i) => (
          <text key={i} x={224 + Math.round((i - 1) * 169.7)} y="1981" textAnchor="end">{i}.0km</text>
        ))}
        <text x="1374" y="1494" textAnchor="end">10</text>
        <text x="1374" y="1961" textAnchor="end">0</text>
      </g>
      <svg x="1300" y="1960" width="74" height="30" viewBox="1300 1960 74 30">
        <text x="1312" y="1981" fontSize="21" fill="#111">7.61km</text>
      </svg>
      <text x="67" y="1497" fontSize="21" fill="#c50f0f">고도(m)</text>
      <text x="1231" y="1497" fontSize="21" fill="#0d0d9c">속도(km/h)</text>
      <g fontSize="53" fontWeight="400">
        <text x="990" y="1984" fill="#111">어리버리 산행~</text>
        <text x="988" y="1982" fill="#fff">어리버리 산행~</text>
      </g>
    </svg>
  );
}

function ChartPanel() {
  return (
    <section className="border-t-2 border-[#6b6b6b] bg-white">
      <header className="flex h-[67px] items-center pr-5 pl-[15px]">
        <button aria-label="뒤로"><BackArrow /></button>
        <h2 className="grow pt-1.5 pl-[17px] text-[27px]/[36px] text-black">속도/고도 상세정보</h2>
        <button className="h-[50px] w-14 rounded-2xl border-2 border-[#878787] text-[24px]/[46px] whitespace-nowrap text-[#7c7c7c]">
          <span className="-mx-1">옵션</span>
        </button>
      </header>
      <ProfileChart />
    </section>
  );
}

export default function App() {
  return (
    <main className={`w-full bg-white ${FONT}`}>
      <div className="grid grid-cols-[668fr_730fr]">
        <SummaryPanel />
        <MapPanel />
      </div>
      <ChartPanel />
    </main>
  );
}
